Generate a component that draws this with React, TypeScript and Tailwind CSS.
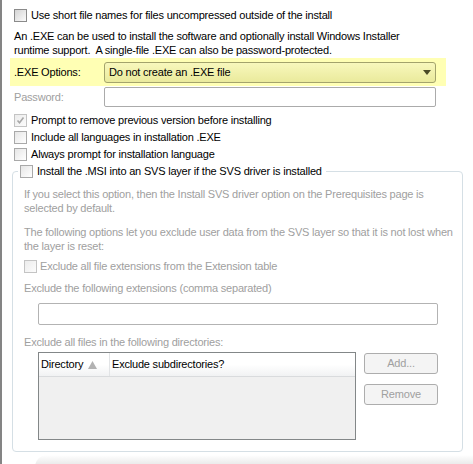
import React from "react";

function Box({ checked = false, variant = "normal" }: { checked?: boolean; variant?: "normal" | "light" | "disabled" }) {
  const cls =
    variant === "normal"
      ? "border-[#8a8a8a] bg-gradient-to-br from-[#d4d4d4] to-[#fbfbfb]"
      : variant === "light"
      ? "border-[#a9a9a9] bg-gradient-to-br from-[#e6e6e6] to-[#ffffff]"
      : "border-[#c4c4c4] bg-gradient-to-br from-[#ececec] to-[#fcfcfc]";
  return (
    <span className={`relative inline-block w-[13px] h-[13px] shrink-0 border ${cls}`}>
      {checked && (
        <svg className="absolute left-[1px] top-[1px]" width="9" height="9" viewBox="0 0 9 9">
          <path d="M1.5 4.5 L3.5 6.8 L7.5 1.5" fill="none" stroke="#a8a8a8" strokeWidth="1.6" />
        </svg>
      )}
    </span>
  );
}

export default function App() {
  return (
    <div className="w-[473px] h-[464px] bg-white border-l-2 border-[#848484] flex flex-col overflow-hidden font-['Liberation_Sans',Arial,sans-serif] text-[11px] tracking-[-0.2px] text-black whitespace-nowrap">
      {/* Row 1 */}
      <div className="shrink-0 mt-[9px] pl-[12px] flex items-center h-[13px] gap-[4px]">
        <Box variant="normal" />
        <span>Use short file names for files uncompressed outside of the install</span>
      </div>

      {/* Paragraph */}
      <div className="shrink-0 mt-[7px] pl-[12px] leading-[14px]">
        An .EXE can be used to install the software and optionally install Windows Installer
        <br />
        runtime support.&nbsp; A single-file .EXE can also be password-protected.
      </div>

      {/* Yellow band */}
      <div className="shrink-0 mt-[1px] ml-[8px] w-[436px] h-[28px] bg-[#ffffb4] flex items-center pl-[4px]">
        <span className="w-[90px]">.EXE Options:</span>
        <div className="w-[332px] h-[21px] rounded-[3px] border border-[#a3a36c] bg-gradient-to-b from-[#f8f8bc] to-[#eaea9c] flex items-center pl-[4px] pr-[4px]">
          <span className="flex-1">Do not create an .EXE file</span>
          <svg width="8" height="5" viewBox="0 0 8 5">
            <path d="M0 0 H8 L4 5 Z" fill="#4a4a26" />
          </svg>
        </div>
      </div>

      {/* Password */}
      <div className="shrink-0 mt-[1px] h-[20px] pl-[12px] flex items-center">
        <span className="w-[90px] text-[#a0a0a0]">Password:</span>
        <div className="w-[332px] h-[20px] rounded-[2px] border border-[#ababab] bg-white" />
      </div>

      {/* Checkboxes */}
      <div className="shrink-0 mt-[5px] pl-[12px] flex flex-col">
        <div className="h-[17px] flex items-center gap-[4px]">
          <Box checked variant="disabled" />
          <span>Prompt to remove previous version before installing</span>
        </div>
        <div className="h-[17px] flex items-center gap-[4px]">
          <Box variant="light" />
          <span>Include all languages in installation .EXE</span>
        </div>
        <div className="h-[17px] flex items-center gap-[4px]">
          <Box variant="light" />
          <span>Always prompt for installation language</span>
        </div>
      </div>

      {/* Group box */}
      <fieldset className="shrink-0 ml-[10px] w-[451px] border border-[#d5dfe5] rounded-[4px] p-0 m-0">
        <legend className="ml-[5px] px-[2px] h-[17px] flex items-center gap-[4px]">
          <Box variant="light" />
          <span className="pr-[2px]">Install the .MSI into an SVS layer if the SVS driver is installed</span>
        </legend>
        <div className="pl-[11px] pb-[11px] flex flex-col text-[#a0a0a0]">
          <div className="mt-[7px] leading-[14px]">
            If you select this option, then the Install SVS driver option on the Prerequisites page is
            <br />
            selected by default.
          </div>
          <div className="mt-[10px] leading-[14px]">
            The following options let you exclude user data from the SVS layer so that it is not lost when
            <br />
            the layer is reset:
          </div>
          <div className="mt-[5px] h-[17px] flex items-center gap-[3px]">
            <Box variant="disabled" />
            <span>Exclude all file extensions from the Extension table</span>
          </div>
          <div className="mt-[6px] leading-[14px]">Exclude the following extensions (comma separated)</div>
          <div className="mt-[8px] ml-[14px] w-[400px] h-[22px] rounded-[2px] border border-[#b3b3b3] bg-white" />
          <div className="mt-[10px] leading-[14px]">Exclude all files in the following directories:</div>
          <div className="mt-[3px] ml-[14px] flex">
            <div className="w-[318px] h-[88px] border border-[#838788] bg-[#f0f0f0] flex flex-col">
              <div className="h-[24px] bg-gradient-to-b from-white via-white to-[#f1f2f3] border-b border-[#d9dbdd] flex items-stretch text-black">
                <div className="w-[71px] border-r border-[#e2e4e6] flex items-center pl-[2px]">
                  <span>Directory</span>
                  <svg className="ml-[5px]" width="9" height="8" viewBox="0 0 9 8">
                    <path d="M4.5 0 L9 8 H0 Z" fill="#b2b2b2" />
                  </svg>
                </div>
                <div className="flex items-center pl-[2px]">Exclude subdirectories?</div>
              </div>
            </div>
            <div className="ml-[8px] flex flex-col">
              <div className="mt-[1px] w-[74px] h-[21px] rounded-[3px] border border-[#adadad] bg-[#f4f4f4] flex items-center justify-center">
                Add...
              </div>
              <div className="mt-[10px] w-[74px] h-[21px] rounded-[3px] border border-[#adadad] bg-[#f4f4f4] flex items-center justify-center">
                Remove
              </div>
            </div>
          </div>
        </div>
      </fieldset>

      {/* bottom shadow */}
      <div className="shrink-0 mt-[3px] ml-[33px] h-[12px] rounded-tl-[12px] bg-gradient-to-b from-white to-[#e4e4e4]" />
    </div>
  );
}
